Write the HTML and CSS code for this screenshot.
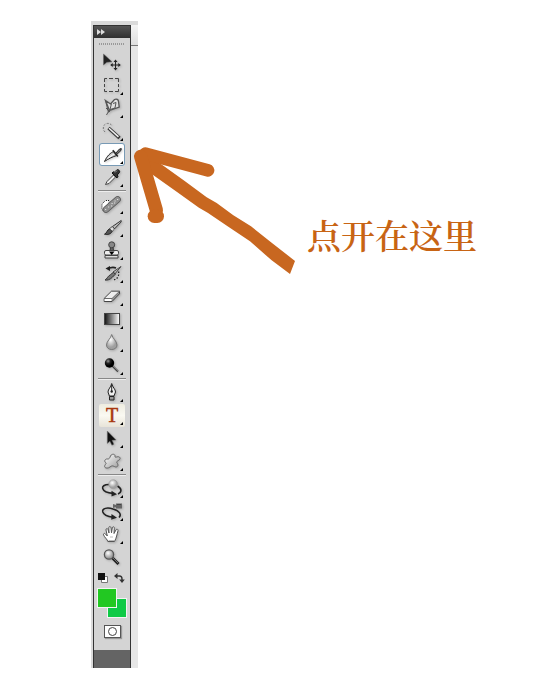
FILE: index.html
```html
<!DOCTYPE html>
<html lang="zh-CN">
<head>
    <meta charset="UTF-8">
    <meta name="viewport" content="width=device-width, initial-scale=1.0">
    <title>Tools</title>
    <link rel="stylesheet" href="styles.css">
</head>
<body>
    <!-- Shared gradients -->
    <svg class="defs" width="0" height="0" aria-hidden="true">
        <defs>
            <linearGradient id="ramp"><stop offset="0" stop-color="#111"/><stop offset="1" stop-color="#fff"/></linearGradient>
            <linearGradient id="metal" x2="1" y2="1"><stop offset="0" stop-color="#fff"/><stop offset="1" stop-color="#999"/></linearGradient>
            <radialGradient id="ball" cx=".4" cy=".35"><stop offset="0" stop-color="#fff"/><stop offset="1" stop-color="#a0a0a0"/></radialGradient>
            <radialGradient id="dark" cx=".35" cy=".3"><stop offset="0" stop-color="#999"/><stop offset=".5" stop-color="#222"/><stop offset="1" stop-color="#000"/></radialGradient>
        </defs>
    </svg>

    <main class="workspace">
        <div class="dock">
            <div class="dock-edge"></div>
            <div class="toolbox">
                <header class="toolbox-header">
                    <button class="collapse" aria-label="Collapse">
                        <svg width="8" height="6" viewBox="0 0 8 6"><path d="M0 0l4 3-4 3zM4 0l4 3-4 3z" fill="#ddd"/></svg>
                    </button>
                </header>
                <div class="toolbox-body">
                    <div class="grip"></div>

                    <div class="tools">
                        <button class="tool single" aria-label="Move">
                            <svg viewBox="0 0 26 23"><path d="M4.500 3v11l3.300-2.700 5.200-.5z" fill="#222" stroke="#666" stroke-width=".5"/><path d="M16.500 10v8M12.500 14h8" stroke="#222"/><path d="M16.500 8.600l2 2.500h-4zM16.500 19.400l2-2.500h-4zM11.200 14l2.500-2v4zM21.800 14l-2.500-2v4z" fill="#222"/></svg>
                        </button>
                        <button class="tool" aria-label="Marquee">
                            <svg viewBox="0 0 26 23"><path d="M5.500 8V4.500H8M10 4.500h4M16 4.500h3.500V8M19.500 10v3M19.500 15v2.500H16M14 17.500h-4M8 17.500H5.500V15M5.500 13v-3" fill="none" stroke="#444"/></svg>
                        </button>
                        <button class="tool" aria-label="Lasso">
                            <svg viewBox="0 0 26 23"><path d="M6.500 3.500L11.500 7l4-4.500c2-1.200 4 .2 4 2l.7 5.500-9.700 3.500z" fill="#ddd" stroke="#555" stroke-width="1.300"/><path d="M6.500 3.500l3 12M10 13.500l-2.500 4.500M12.500 6.500l-1.500 6 5-1.500 1-5.500-3 1M7 11l4 4" fill="none" stroke="#555"/></svg>
                        </button>
                        <button class="tool" aria-label="Magic wand">
                            <svg viewBox="0 0 26 23"><path d="M6 12C3.500 10 3.700 5.500 6.500 4c2.500-1.300 5.500-.5 6.500 2" fill="none" stroke="#777" stroke-dasharray="2 1.500"/><path d="M9.500 8l11 10" stroke="#333" stroke-width="3.400"/><path d="M10 8.200l9.500 8.700" stroke="#eee" stroke-width="1.500"/></svg>
                        </button>
                        <button class="tool active" aria-label="Slice">
                            <svg viewBox="0 0 26 23"><path d="M5.500 18.500C8 13 11.500 9.500 15 8.500l2.700 4C13 14 9 16 5.500 18.500z" fill="#ccc" stroke="#222"/><path d="M8.500 15.500l6.500-4.500" stroke="#fff"/><path d="M16.500 10.500l4-4.500 1.800-.4-.4 2-4.300 4z" fill="#777" stroke="#222"/><path d="M13.800 7.300l5 6.200" stroke="#222" stroke-width="1.500"/></svg>
                        </button>
                        <button class="tool" aria-label="Eyedropper">
                            <svg viewBox="0 0 26 23"><path d="M6.500 18.500l1.500-3 6.500-6.500 2 2-6.500 6.500z" fill="#eee" stroke="#444"/><path d="M13 7l5 5 1-1.800-.8-1.200 2.200-2.400c1-1.800-1-3.500-2.600-2.700L15.500 6.200l-1.200-.4z" fill="#333" stroke="#111"/><path d="M16 6.500l2-2" stroke="#999"/></svg>
                        </button>
                    </div>

                    <div class="tools">
                        <button class="tool" aria-label="Healing brush">
                            <svg viewBox="0 0 26 23"><path d="M10 7.500H6.500L3 11v5.500l3 2.500" fill="#fff" stroke="#222" stroke-dasharray="1 1"/><path d="M7 16.500l11.500-10" stroke="#555" stroke-width="6.600" stroke-linecap="round"/><path d="M7 16.500l11.500-10" stroke="#909090" stroke-width="5" stroke-linecap="round"/><path d="M6 16.500h1.200M9 14h1.200M12 13h1.200M12.500 10.500h1.200M15 10h1.200M15.500 8h1.200M18 6.500h1.200" stroke="#ddd" stroke-width="1.200"/></svg>
                        </button>
                        <button class="tool" aria-label="Brush">
                            <svg viewBox="0 0 26 23"><path d="M22.200 4.500l-8.700 6 2 2.400 6.700-7z" fill="#bbb" stroke="#333"/><path d="M5.500 18.200c2.500-.7 2-4.200 5.300-5.400l2.300 2.500c-1 3-5 3.700-7.600 2.900z" fill="#555" stroke="#222"/><path d="M10.500 12.700l2.800-2.200 2.200 2.500-2.300 2.300z" fill="#ddd" stroke="#333" stroke-width=".8"/></svg>
                        </button>
                        <button class="tool" aria-label="Clone stamp">
                            <svg viewBox="0 0 26 23"><path d="M11.500 8h2.500l.5 4h-3.500z" fill="#666" stroke="#333"/><circle cx="12.700" cy="5.800" r="3" fill="#888" stroke="#444"/><rect x="5.500" y="11.500" width="14" height="4.500" rx="1.500" fill="#eee" stroke="#444"/><path d="M6 16.500h13v2.500H6z" fill="#ddd" stroke="#444"/><path d="M10 12.500h5.500L12.700 16z" fill="#000"/></svg>
                        </button>
                        <button class="tool" aria-label="History brush">
                            <svg viewBox="0 0 26 23"><path d="M9 7c3-2 6-1.800 8-1" fill="none" stroke="#222" stroke-width="1.500"/><path d="M19.500 9.500c1 4-1 7.500-5 8.500" fill="none" stroke="#222" stroke-width="1.300" stroke-dasharray="1.500 1.500"/><path d="M6.500 6.500l4.500-2.500v5z" fill="#222"/><path d="M22 4.500l-8 5.500 1.700 2.200z" fill="#bbb" stroke="#444"/><path d="M6 18c2-.8 2.400-3.600 5.400-5.300l3.200-2.500 1.700 2-2.900 3C11 17.700 8 18.500 6 18z" fill="#777" stroke="#333"/></svg>
                        </button>
                        <button class="tool" aria-label="Eraser">
                            <svg viewBox="0 0 26 23"><path d="M5.200 13.500l7.300-7.200h8v2.500L13 16.500H5.200z" fill="#999" stroke="#444"/><path d="M5.200 13.500l7.300-7.200h8L13 13.500z" fill="#eee" stroke="#555" stroke-width=".8"/><path d="M5.500 14h7v2h-7z" fill="#fff"/></svg>
                        </button>
                        <button class="tool" aria-label="Gradient">
                            <svg viewBox="0 0 26 23"><rect x="5.500" y="5.500" width="15" height="11" fill="url(#ramp)" stroke="#444"/></svg>
                        </button>
                        <button class="tool" aria-label="Blur">
                            <svg viewBox="0 0 26 23"><path d="M12.700 3.500c.7 4 5.300 6.500 5.300 10.500 0 2.800-2.400 4.500-5.300 4.500S7.500 16.800 7.500 14c0-4 4.500-6.500 5.200-10.500z" fill="url(#ball)" stroke="#777"/></svg>
                        </button>
                        <button class="tool" aria-label="Burn">
                            <svg viewBox="0 0 26 23"><path d="M13 11.500l6 6" stroke="#444" stroke-width="1.800"/><path d="M14 12l5 5" stroke="#aaa" stroke-width=".6"/><circle cx="10.500" cy="9" r="4.700" fill="url(#dark)"/></svg>
                        </button>
                    </div>

                    <div class="tools">
                        <button class="tool" aria-label="Pen">
                            <svg viewBox="0 0 26 23"><path d="M12.700 2.500c.8 4 3.800 5.500 3.800 8.500L15 15h-4.600L9 11c0-3 3-4.500 3.700-8.500z" fill="#eee" stroke="#222"/><path d="M12.700 4v6" stroke="#222"/><circle cx="12.700" cy="10.500" r="1.200" fill="#222"/><path d="M10.500 15.500h4.500v3.500h-4.500z" fill="#999" stroke="#222"/></svg>
                        </button>
                        <button class="tool hover" aria-label="Type"><span class="letter">T</span></button>
                        <button class="tool" aria-label="Path selection">
                            <svg viewBox="0 0 26 23"><path d="M8.300 4v12.500l2.600-2.300 2 4 2-1-1.800-3.900 4-.3z" fill="#111" stroke="#777" stroke-width=".5"/></svg>
                        </button>
                        <button class="tool" aria-label="Custom shape">
                            <svg viewBox="0 0 26 23"><path d="M11.500 6c1-2.500 5-2.300 4.500.5-.2 1 1 .8 2 .4 3-.8 4.300 1.800 1.800 3.300-2 1.300-2.700 1.500-1.500 3.100 1.800 2.500-.5 4.700-3 3.200-1.800-1-2.600-.8-4.300.5-2.500 2-6.200 1.200-5.200-1.500.8-1.800 2-2 1-2.800-2.200-1.500-.5-4 1.500-3.700 2 .2 2.400-1 3.200-3z" fill="url(#metal)" stroke="#666"/></svg>
                        </button>
                    </div>

                    <div class="tools">
                        <button class="tool" aria-label="3D rotate">
                            <svg viewBox="0 0 26 23"><path d="M10 7.500c-5 0-7 2-6.300 4 .9 2.600 5 4.500 10 4.900M18.500 9c5 3 4 6.500 .5 8" fill="none" stroke="#222" stroke-width="1.600"/><path d="M18 17.200l-5.500-3.500v5.800z" fill="#222"/><circle cx="14.200" cy="7.200" r="4.400" fill="url(#ball)" stroke="#999" stroke-width=".6"/></svg>
                        </button>
                        <button class="tool" aria-label="3D orbit">
                            <svg viewBox="0 0 26 23"><path d="M14 9C8 7 3 8.500 3.700 11.700c.8 2.800 5 5 10.300 5.500M14 9c6.500 2 9 5.500 6 8.500" fill="none" stroke="#222" stroke-width="1.500"/><path d="M18 17.800l-5.500-3.800-.3 5.700z" fill="#222"/><path d="M17 3.500h6v5h-6zM14 4l3 1v2l-3 1z" fill="#666"/><path d="M18 4.500h4" stroke="#444"/></svg>
                        </button>
                        <button class="tool" aria-label="Hand">
                            <svg viewBox="0 0 26 23"><path d="M8.800 18.500c-.2-2-3.300-4-4.300-6.700-.4-1.500 1.200-1.900 2-.8l1.800 2L7 7c-.3-1.700 1.600-2 2-.5l1 3.500-.2-5.200c0-1.700 2-1.700 2.200 0l.5 5 .8-5c.4-1.600 2.300-1.200 2 .4L15 10.500l2-3.600c.8-1.400 2.400-.6 2 .8-1 3.300-1.500 7.300-3.500 10.800z" fill="#fff" stroke="#555"/><path d="M9.500 17.500h5.500M11 14h3" stroke="#bbb"/></svg>
                        </button>
                        <button class="tool single" aria-label="Zoom">
                            <svg viewBox="0 0 26 23"><path d="M13.500 12l6 6" stroke="#222" stroke-width="3"/><path d="M14 12l5 5" stroke="#888" stroke-width=".8"/><circle cx="10" cy="8.500" r="4.600" fill="url(#ball)" stroke="#555" stroke-width="1.300"/></svg>
                        </button>
                    </div>

                    <div class="color-actions">
                        <button aria-label="Default colors">
                            <svg width="10" height="10" viewBox="0 0 10 10"><path d="M3.500 3.500h6v6h-6z" fill="#fff" stroke="#777"/><path d="M0 0h7v7H0z" fill="#111"/></svg>
                        </button>
                        <button aria-label="Switch colors">
                            <svg width="11" height="10" viewBox="0 0 11 10"><path d="M3 3h2.500Q8 3 8 6v1" fill="none" stroke="#333" stroke-width="1.400"/><path d="M0 3l3.500-3v6zM8 10L5.200 6.500h5.600z" fill="#333"/></svg>
                        </button>
                    </div>
                    <div class="swatches">
                        <button class="swatch background" aria-label="Background color"></button>
                        <button class="swatch foreground" aria-label="Foreground color"></button>
                    </div>
                    <button class="quick-mask" aria-label="Quick mask">
                        <svg width="11" height="11" viewBox="0 0 11 11"><circle cx="5.500" cy="5.500" r="4" fill="#fff" stroke="#444"/></svg>
                    </button>
                </div>
                <div class="toolbox-footer"></div>
            </div>
            <div class="ruler"><div class="ruler-tab"></div></div>
        </div>

        <section class="callout">
            <svg class="arrow" width="168" height="134" viewBox="18 24 504 402" aria-hidden="true">
                <g fill="#c86720" stroke="#c86720" stroke-linecap="round" stroke-linejoin="round">
                    <path d="M45 45L112 90 178 137 245 187 275 204 325 241 378 274 440 323 510 378 495 417 440 376 375 319 310 275 248 233 222 218 155 170 80 117 38 82z" stroke="none"/>
                    <path d="M61 56L249 106" stroke-width="38"/>
                    <path d="M47 64L94 225" stroke-width="40"/>
                    <path d="M88 244h9" stroke-width="40"/>
                </g>
            </svg>
            <p class="callout-text">点开在这里</p>
        </section>
    </main>
</body>
</html>
```

FILE: styles.css
```css
:root {
    --panel: #d4d4d4;
    --line: #333;
    --accent: #c86414;
}

* {
    margin: 0;
    padding: 0;
    box-sizing: border-box;
}

body {
    background-color: #fff;
    font-family: "Liberation Sans", sans-serif;
}

button {
    display: block;
    border: none;
    background: none;
    cursor: pointer;
}

svg {
    display: block;
}

.defs {
    position: absolute;
}

.workspace {
    display: flex;
    align-items: flex-start;
    padding: 21px 24px 24px 91px;
}

/* Dock */
.dock {
    display: flex;
    flex: none;
    border-top: 4px solid #dadada;
}

.dock-edge {
    width: 2px;
    background-color: #dadada;
}

.toolbox {
    width: 38px;
    border: 1px solid var(--line);
    border-bottom: none;
    background-color: var(--panel);
}

.toolbox-header {
    height: 12px;
    padding: 3px;
    background: linear-gradient(#555, #303030);
}

.toolbox-body {
    padding: 4px 5px 12px;
}

.toolbox-footer {
    height: 18px;
    background-color: #646464;
}

.grip {
    height: 3px;
    margin-bottom: 6px;
    background: repeating-linear-gradient(to right, #999 0 1px, transparent 1px 2px);
    border-top: 1px solid var(--panel);
}

/* Tools */
.tools + .tools {
    position: relative;
    padding-top: 4px;
}

.tools + .tools::before {
    content: "";
    position: absolute;
    top: 1px;
    left: -1px;
    right: -1px;
    height: 2px;
    background: linear-gradient(#888 50%, #eee 50%);
}

.tool {
    position: relative;
    width: 26px;
    height: 23px;
}

.tool svg {
    width: 26px;
    height: 23px;
    filter: drop-shadow(1px 1px 1px rgba(0, 0, 0, 0.2));
}

.tool::after {
    content: "";
    position: absolute;
    right: 2px;
    bottom: 2px;
    border-left: 3px solid transparent;
    border-bottom: 3px solid #000;
}

.tool.single::after {
    display: none;
}

.tool.active {
    background-color: #fff;
    border-radius: 3px;
    box-shadow: inset 0 0 0 1px #789ab5;
}

.tool.hover {
    background: linear-gradient(#eeece0, #faf9f2 50%, #e8e4d8);
    border-radius: 2px;
}

.letter {
    display: block;
    padding-bottom: 2px;
    color: #a83810;
    font: 20px/20px "Liberation Serif", serif;
    -webkit-text-stroke: 0.5px #a83810;
}

/* Colors */
.color-actions {
    display: flex;
    justify-content: space-between;
    margin: 4px 0 5px -1px;
}

.swatches {
    position: relative;
    height: 30px;
    margin: 0 -2px;
}

.swatch {
    position: absolute;
    width: 20px;
    height: 20px;
    border: 1px solid #f4f4f4;
}

.foreground {
    top: 0;
    left: 0;
    background-color: #22c822;
}

.background {
    right: 0;
    bottom: 0;
    background-color: #0fca46;
}

.quick-mask {
    margin: 7px auto 0;
    padding: 0 2px;
    border: 1px solid #555;
    background-color: #fff;
    box-shadow: 1px 1px 1px #999;
}

.ruler {
    width: 7px;
    background-color: #e6e6e6;
}

.ruler-tab {
    height: 21px;
    border-bottom: 1px solid #777;
    background: linear-gradient(#f4f4f4, #dedede);
}

/* Callout */
.callout {
    position: relative;
    flex: 1;
    padding: 194px 0 0 169px;
}

.arrow {
    position: absolute;
    top: 122px;
    left: -7px;
}

.callout-text {
    color: var(--accent);
    font: 600 34px/40px "Noto Serif CJK SC", "Noto Sans CJK SC", serif;
    white-space: nowrap;
}
```
